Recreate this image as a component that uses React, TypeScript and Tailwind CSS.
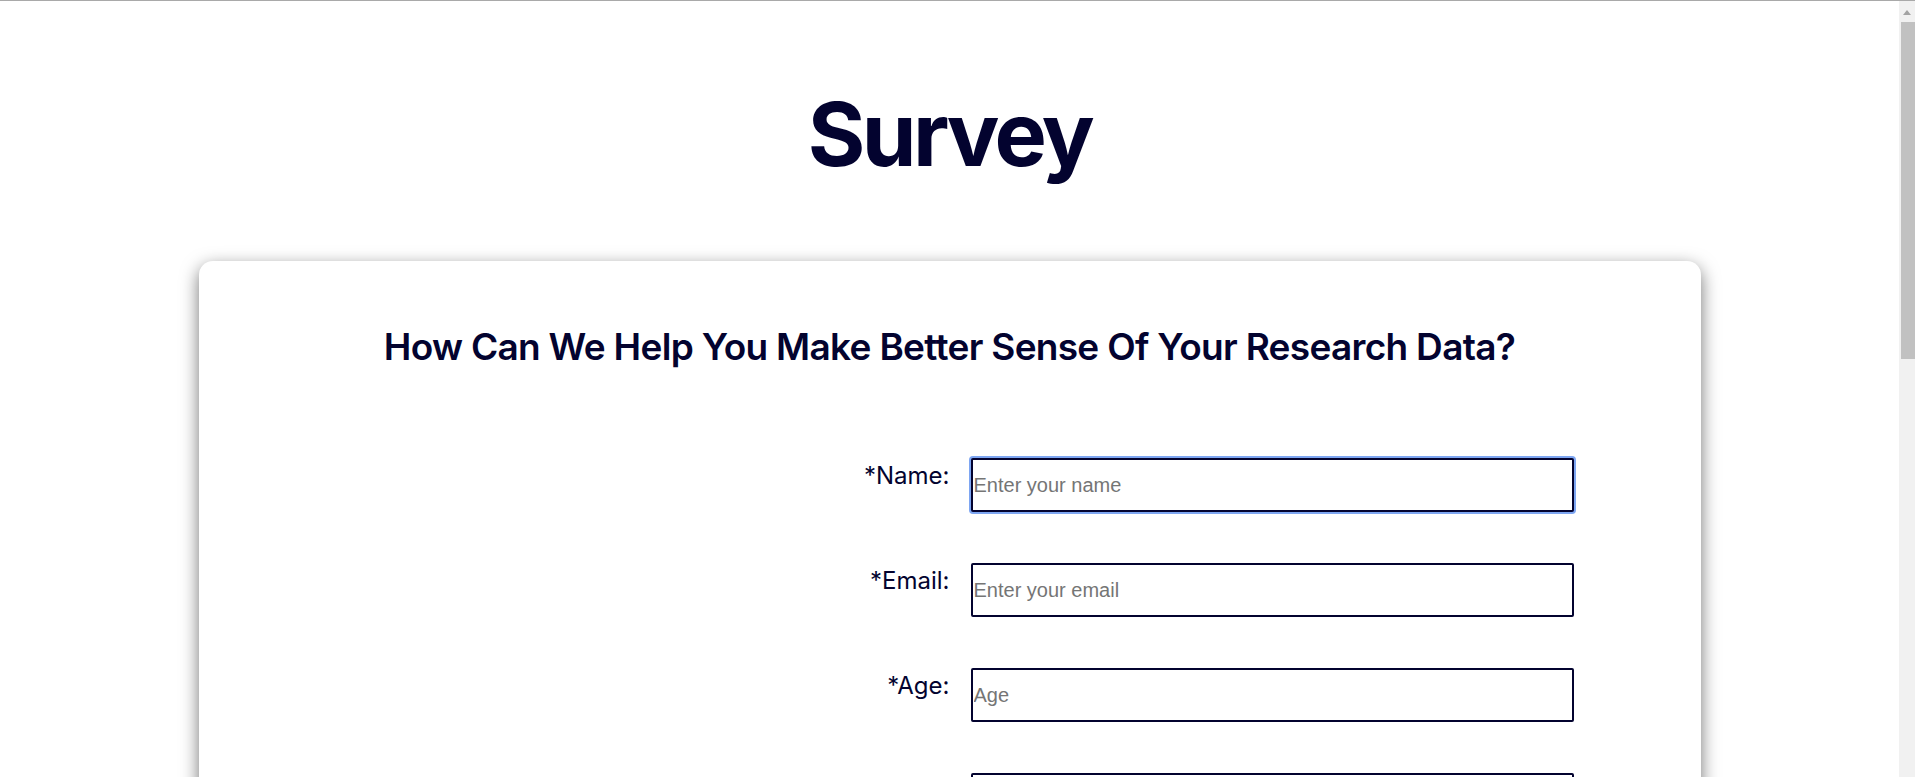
import React from 'react';

const fields = [
  { label: '*Name:', type: 'text', placeholder: 'Enter your name', focus: true },
  { label: '*Email:', type: 'email', placeholder: 'Enter your email' },
  { label: '*Age:', type: 'number', placeholder: 'Age' },
  { label: 'Occupation:', type: 'text', placeholder: 'Enter your occupation' },
  { label: 'Organization:', type: 'text', placeholder: 'Enter your organization' },
  { label: 'Field of Study:', type: 'text', placeholder: 'Enter your field of study' },
];

// classic browser scrollbar, page is ~1710px tall
function Scrollbar() {
  return (
    <div className="flex w-[16px] shrink-0 flex-col bg-[#f1f1f1] pt-px">
      <div className="flex h-[20px] items-center justify-center">
        <svg width="8" height="5" viewBox="0 0 8 5">
          <path d="M0 5 L4 0 L8 5 Z" fill="#a3a3a3" />
        </svg>
      </div>
      <div className="ml-[2px] h-[337px] bg-[#c1c1c1]" />
    </div>
  );
}

export default function App() {
  return (
    <div className="flex h-[777px] flex-col overflow-hidden bg-white font-['Inter',sans-serif] text-[#03032f]">
      <div className="h-px shrink-0 bg-[#a9a9a9]" />
      <div className="flex min-h-0 flex-1">
        <main className="min-w-0 flex-1 overflow-hidden">
          <h1 className="mt-[89px] text-center text-[88px] leading-none font-bold tracking-[-3.5px]">Survey</h1>

          <div className="mx-auto mt-[83px] mb-[60px] w-[1502px] rounded-[14px] bg-white pt-[67px] pb-[80px] shadow-[0_6px_18px_rgba(0,0,0,0.55)]">
            <h2 className="text-center text-[37px] leading-none font-semibold tracking-[-0.7px]">
              How Can We Help You Make Better Sense Of Your Research Data?
            </h2>

            <form className="mt-[93px] flex flex-col gap-[51px]" onSubmit={(e) => e.preventDefault()}>
              {fields.map((f) => (
                <div key={f.label} className="grid grid-cols-2">
                  <label className="pt-[6px] text-right text-[24px] leading-none">{f.label}</label>
                  <div className="pl-[21px]">
                    <input
                      type={f.type}
                      autoFocus={f.focus}
                      placeholder={f.placeholder}
                      className={`h-[54px] w-[603px] rounded-[2px] border-2 border-[#03032f] bg-white px-px font-['Liberation_Sans',Arial,sans-serif] text-[20px] text-[#03032f] outline-none placeholder:text-[#757575] ${
                        f.focus ? 'ring-2 ring-[#7ea6f2]' : ''
                      }`}
                    />
                  </div>
                </div>
              ))}

              <div className="grid grid-cols-2">
                <label className="pt-[6px] text-right text-[24px] leading-none">Comments:</label>
                <div className="pl-[21px]">
                  <textarea
                    placeholder="Tell us about your research"
                    className="h-[180px] w-[603px] rounded-[2px] border-2 border-[#03032f] px-px font-['Liberation_Sans',Arial,sans-serif] text-[20px] outline-none placeholder:text-[#757575]"
                  />
                </div>
              </div>

              <div className="flex justify-center">
                <button
                  type="submit"
                  className="rounded-[6px] bg-[#03032f] px-10 py-3 text-[22px] font-semibold text-white"
                >
                  Submit
                </button>
              </div>
            </form>
          </div>
        </main>
        <Scrollbar />
      </div>
    </div>
  );
}
